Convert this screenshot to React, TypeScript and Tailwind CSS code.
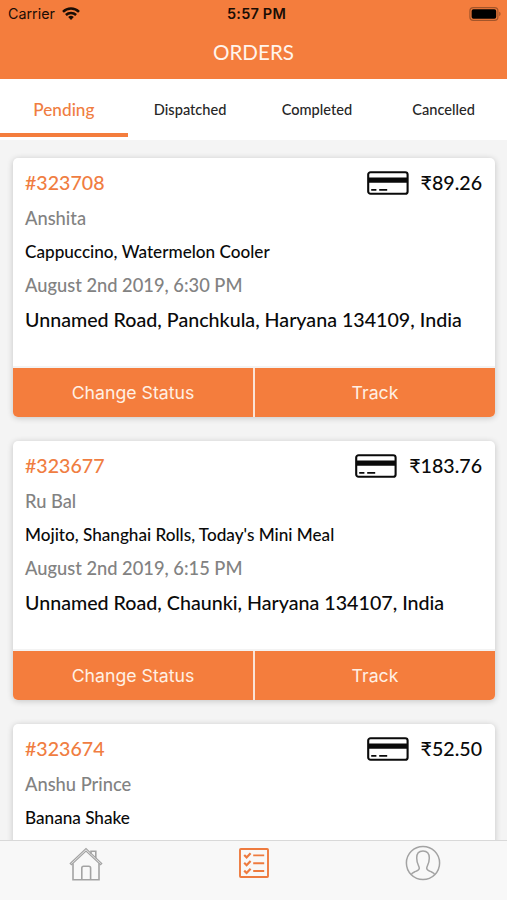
type Order = {
  id: string;
  amount: string;
  customer: string;
  items: string;
  date?: string;
  address?: string;
};

const TABS = ["Pending", "Dispatched", "Completed", "Cancelled"];

const ORDERS: Order[] = [
  {
    id: "#323708",
    amount: "₹89.26",
    customer: "Anshita",
    items: "Cappuccino, Watermelon Cooler",
    date: "August 2nd 2019, 6:30 PM",
    address: "Unnamed Road, Panchkula, Haryana 134109, India",
  },
  {
    id: "#323677",
    amount: "₹183.76",
    customer: "Ru Bal",
    items: "Mojito, Shanghai Rolls, Today's Mini Meal",
    date: "August 2nd 2019, 6:15 PM",
    address: "Unnamed Road, Chaunki, Haryana 134107, India",
  },
  {
    id: "#323674",
    amount: "₹52.50",
    customer: "Anshu Prince",
    items: "Banana Shake",
  },
];

function WifiIcon() {
  return (
    <svg width="18" height="13" viewBox="0 0 18 13" fill="none" stroke="#1a0d05" strokeWidth="2.5">
      <path d="M1 4.8a11.4 11.4 0 0 1 16 0" />
      <path d="M3.9 8a7.3 7.3 0 0 1 10.2 0" />
      <path d="M9 12.9 6.2 10.1a4 4 0 0 1 5.6 0Z" fill="#1a0d05" stroke="none" />
    </svg>
  );
}

function BatteryIcon() {
  return (
    <svg width="33" height="14" viewBox="0 0 33 14">
      <rect x="0.9" y="0.6" width="28" height="12.8" rx="3.4" fill="none" stroke="#a3552a" strokeWidth="1.2" />
      <rect x="2.6" y="2.3" width="24.6" height="9.4" rx="1.8" fill="#000" />
      <path d="M30.2 4.8v4.4c1.8-.6 1.8-3.8 0-4.4Z" fill="#a3552a" />
    </svg>
  );
}

function CardIcon() {
  return (
    <svg width="42" height="24" viewBox="0 0 42 24">
      <rect x="1.2" y="1.2" width="39.4" height="21.6" rx="2.4" fill="none" stroke="#0a0a0a" strokeWidth="2.1" />
      <path d="M1 6.4h40v5.4H1z" fill="#0a0a0a" />
      <path d="M4.2 18.8h5.2M12.2 18.8h8" stroke="#0a0a0a" strokeWidth="1.7" />
    </svg>
  );
}

function HomeIcon() {
  return (
    <svg width="34" height="34" viewBox="0 0 34 34" fill="none" stroke="#a3a3a3" strokeWidth="1.6">
      <path d="M1.2 16.5 17 1.6l15.8 14.9-1.2 1.2L17 4 2.4 17.7Z" strokeWidth="1.1" />
      <path d="M4 16.2v16.6h26V16.2" />
      <path d="M12.8 32.5V21q0-1.8 1.8-1.8h5.2q1.8 0 1.8 1.8v11.500" />
      <path d="M22 6.8V4.2h4.8v7" />
    </svg>
  );
}

function ListIcon() {
  return (
    <svg width="30" height="30" viewBox="0 0 30 30" fill="none" stroke="#ee7b3f" strokeWidth="1.9">
      <rect x="1" y="1" width="28" height="28" rx="0.8" />
      <path d="m5.2 7 2.4 2.4 4-4.2M5.2 14.8l2.4 2.4 4-4.2M5.2 22.6 7.6 25l4-4.2" strokeWidth="2.2" />
      <path d="M14.2 7.4h11M14.2 15.2h11M14.2 23h11" />
    </svg>
  );
}

function ProfileIcon() {
  return (
    <svg width="36" height="36" viewBox="0 0 36 36" fill="none" stroke="#a3a3a3" strokeWidth="1.5">
      <circle cx="18" cy="18" r="16.6" />
      <path d="M6.2 29.700c.5-1.300 1.700-2 3.200-2.700 2.900-1.300 4.900-1.700 4.900-3.800 0-2.300-2.600-4.300-2.600-10.200 0-4.600 1.900-7.100 6.300-7.100s6.300 2.500 6.300 7.100c0 5.900-2.600 7.900-2.600 10.200 0 2.100 2 2.500 4.900 3.800 1.500.7 2.700 1.400 3.200 2.700" />
    </svg>
  );
}

function OrderCard({ order }: { order: Order }) {
  return (
    <article className="flex h-[259px] shrink-0 flex-col overflow-hidden rounded-[5px] bg-white shadow-[0_1px_6px_rgba(0,0,0,0.2)]">
      <div className="flex-1 px-[12.5px] pt-2">
        <div className="flex h-[34px] items-center justify-between">
          <span className="text-[19.6px] leading-[34px] font-medium text-[#f07d41]">{order.id}</span>
          <div className="flex items-center gap-3">
            <CardIcon />
            <span className="text-[19.6px] leading-[34px] font-medium">{order.amount}</span>
          </div>
        </div>
        <p className="h-[35px] text-[18.3px] leading-[37px] font-medium text-[#828282]">{order.customer}</p>
        <p className="h-[33px] text-[17.15px] leading-[33px] font-medium">{order.items}</p>
        {order.date && (
          <p className="h-[34px] text-[18.3px] leading-[34px] font-medium text-[#828282]">{order.date}</p>
        )}
        {order.address && (
          <p className="h-[36px] text-[19.65px] leading-[35px] font-medium whitespace-nowrap">{order.address}</p>
        )}
      </div>
      {order.address && (
        <div className="grid h-[51px] grid-cols-2 gap-[2px] border-t-2 border-[#f3f3f3] bg-[#fbe3d5] font-[Inter] text-[17.7px] text-[#fff0e4]">
          <button className="bg-[#f47d3d] pt-0.5 pl-px">Change Status</button>
          <button className="bg-[#f47d3d] pt-0.5 pl-px">Track</button>
        </div>
      )}
    </article>
  );
}

export default function App() {
  return (
    <div className="flex h-[900px] w-[507px] flex-col overflow-hidden bg-[#f4f4f4] font-[Lato,sans-serif] text-[#0a0a0a]">
      <header className="h-[79px] shrink-0 bg-[#f47d3d]">
        <div className="grid h-[27px] grid-cols-3 items-center pr-[5px] pl-2 font-[Inter] text-[14px] text-[#1a0d05]">
          <div className="flex items-center gap-[7px]">
            <span className="text-[14.3px]">Carrier</span>
            <WifiIcon />
          </div>
          <span className="pl-[3px] text-center text-[14.5px] font-semibold tracking-[0.2px]">5:57 PM</span>
          <div className="flex justify-end">
            <BatteryIcon />
          </div>
        </div>
        <h1 className="text-center text-[20.6px] leading-[50px] text-[#fff4ec]">ORDERS</h1>
      </header>

      <nav className="grid h-[61px] shrink-0 grid-cols-4 bg-white">
        {TABS.map((tab, idx) => (
          <button
            key={tab}
            className={
              idx === 0
                ? "mr-[-1px] mb-[3px] border-b-4 border-[#f47d3d] pt-[7px] text-[17.2px] font-medium text-[#f07d41]"
                : "mb-[3px] border-b-4 border-transparent pt-[7px] text-[14.6px] font-medium text-[#262626]"
            }
          >
            {tab}
          </button>
        ))}
      </nav>

      <main className="flex min-h-0 flex-1 flex-col gap-6 overflow-hidden px-[12.5px] pt-[18px]">
        {ORDERS.map((order) => (
          <OrderCard key={order.id} order={order} />
        ))}
      </main>

      <footer className="grid h-[60px] shrink-0 grid-cols-3 border-t border-[#d9d9d9] bg-[#f8f8f8]">
        <div className="flex justify-center pt-[6px] pl-0.5"><HomeIcon /></div>
        <div className="flex justify-center pt-[7px]"><ListIcon /></div>
        <div className="flex justify-center pt-[4px]"><ProfileIcon /></div>
      </footer>
    </div>
  );
}
